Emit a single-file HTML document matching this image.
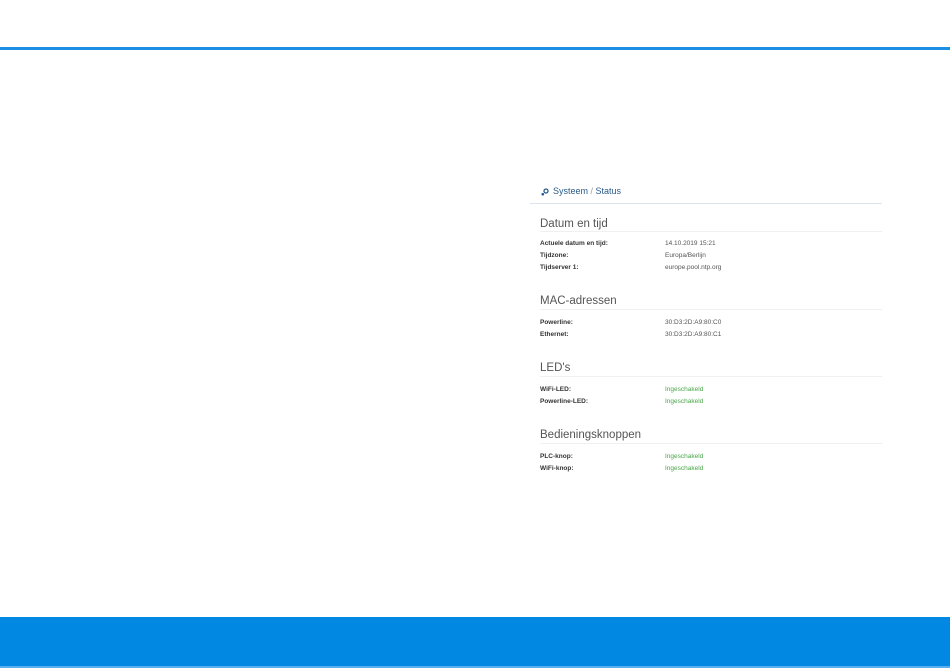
<!DOCTYPE html>
<html><head><style>
body{margin:0;width:950px;height:668px;background:#fff;position:relative;overflow:hidden;font-family:"Liberation Sans",sans-serif;}
.top{position:absolute;left:0;top:47px;width:950px;height:3px;background:#1a8fe3;}
.foot{position:absolute;left:0;top:617px;width:950px;height:49px;background:#0088e2;}
.foot2{position:absolute;left:0;top:666px;width:950px;height:2px;background:#5ab0ee;}
.t{position:absolute;white-space:nowrap;}
.bc{left:553px;top:186px;font-size:9px;color:#2a5a8a;}
.hr{position:absolute;left:530px;width:352px;height:1px;background:#dde3e8;}
.h{left:540px;font-size:11.5px;color:#555;}
.l{left:540px;font-size:6.5px;font-weight:bold;color:#333;}
.v{left:665px;font-size:6.5px;color:#555;}
.g{color:#4aa64a;}
</style></head><body>
<div class="top"></div>
<svg style="position:absolute;left:541px;top:188px" width="8" height="8" viewBox="0 0 8 8"><circle cx="5" cy="3" r="2" fill="none" stroke="#2a5a8a" stroke-width="1.3"/><circle cx="1.8" cy="6.2" r="1.3" fill="#2a5a8a"/></svg>
<div class="t bc">Systeem <span style="color:#999">/</span> Status</div>
<div class="hr" style="top:203px"></div>
<div class="t h" style="top:218px">Datum en tijd</div><div class="hr" style="top:231px;left:540px;width:342px;background:#eef0f2"></div>
<div class="t l" style="top:240px">Actuele datum en tijd:</div><div class="t v" style="top:240px">14.10.2019 15:21</div>
<div class="t l" style="top:252px">Tijdzone:</div><div class="t v" style="top:252px">Europa/Berlijn</div>
<div class="t l" style="top:264px">Tijdserver 1:</div><div class="t v" style="top:264px">europe.pool.ntp.org</div>
<div class="t h" style="top:295px">MAC-adressen</div><div class="hr" style="top:309px;left:540px;width:342px;background:#eef0f2"></div>
<div class="t l" style="top:319px">Powerline:</div><div class="t v" style="top:319px">30:D3:2D:A9:80:C0</div>
<div class="t l" style="top:331px">Ethernet:</div><div class="t v" style="top:331px">30:D3:2D:A9:80:C1</div>
<div class="t h" style="top:362px">LED's</div><div class="hr" style="top:376px;left:540px;width:342px;background:#eef0f2"></div>
<div class="t l" style="top:386px">WiFi-LED:</div><div class="t v g" style="top:386px">Ingeschakeld</div>
<div class="t l" style="top:398px">Powerline-LED:</div><div class="t v g" style="top:398px">Ingeschakeld</div>
<div class="t h" style="top:429px">Bedieningsknoppen</div><div class="hr" style="top:443px;left:540px;width:342px;background:#eef0f2"></div>
<div class="t l" style="top:453px">PLC-knop:</div><div class="t v g" style="top:453px">Ingeschakeld</div>
<div class="t l" style="top:465px">WiFi-knop:</div><div class="t v g" style="top:465px">Ingeschakeld</div>
<div class="foot"></div><div class="foot2"></div>
</body></html>
